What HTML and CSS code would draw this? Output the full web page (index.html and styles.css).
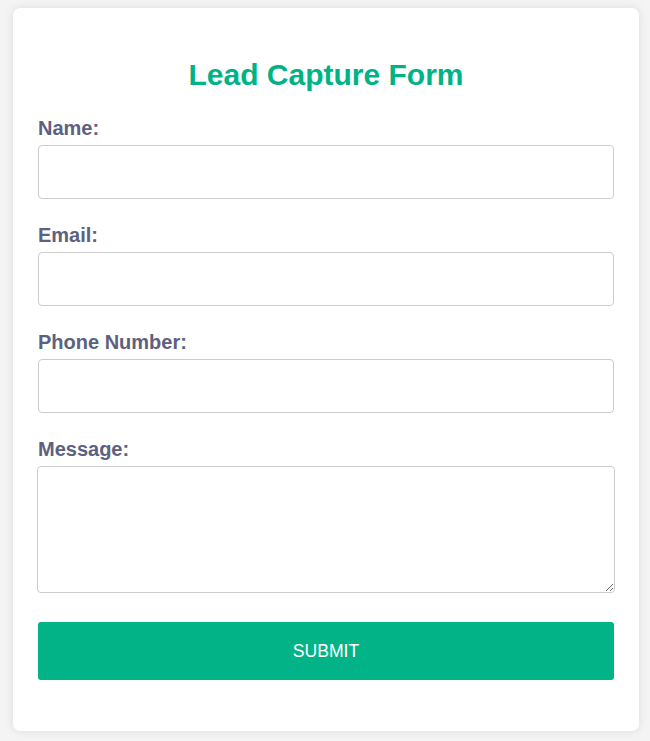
FILE: index.html
```html
<!DOCTYPE html>
<html lang="en">
<head>
<meta charset="utf-8">
<title>Lead Capture Form</title>
<link rel="stylesheet" href="styles.css">
</head>
<body>
<div class="card">
  <h2 class="title">Lead Capture Form</h2>
  <form class="form">
    <label class="label" for="name">Name:</label>
    <input class="field" type="text" id="name">
    <label class="label" for="email">Email:</label>
    <input class="field" type="email" id="email">
    <label class="label" for="phone">Phone Number:</label>
    <input class="field" type="tel" id="phone">
    <label class="label" for="message">Message:</label>
    <textarea class="area" id="message"></textarea>
    <button class="submit" type="button">SUBMIT</button>
  </form>
</div>
</body>
</html>
```

FILE: styles.css
```css
html, body {
  margin: 0;
  padding: 0;
}
body {
  background: #f4f4f4;
  font-family: "Liberation Sans", Arial, sans-serif;
  padding: 8px 0 10px 13px;
  min-height: 741px;
  box-sizing: border-box;
}
.card {
  width: 626px;
  box-sizing: border-box;
  background: #ffffff;
  border-radius: 7px;
  box-shadow: 0 0 10px rgba(0, 0, 0, 0.1);
  padding: 50px 25px 51px;
}
.title {
  margin: 0 0 25px;
  font-size: 30px;
  line-height: 34px;
  font-weight: bold;
  color: #00b386;
  text-align: center;
}
.form {
  display: flex;
  flex-direction: column;
}
.label {
  display: block;
  font-size: 20px;
  line-height: 23px;
  font-weight: bold;
  color: #5c6180;
  margin-bottom: 5px;
}
.field {
  display: block;
  width: 100%;
  height: 54px;
  box-sizing: border-box;
  border: 1px solid #cccccc;
  border-radius: 4px;
  margin: 0 0 25px;
  padding: 0 12px;
  font-family: inherit;
  font-size: 16px;
  background: #ffffff;
}
.area {
  display: block;
  width: calc(100% + 2px);
  height: 127px;
  box-sizing: border-box;
  border: 1px solid #cccccc;
  border-radius: 4px;
  margin: 0 0 29px -1px;
  padding: 8px 12px;
  font-family: inherit;
  font-size: 16px;
  background: #ffffff;
}
.submit {
  display: block;
  width: 100%;
  height: 58px;
  border: none;
  border-radius: 3px;
  background: #03b388;
  color: #ffffff;
  font-family: inherit;
  font-size: 17.6px;
  cursor: pointer;
}
```
